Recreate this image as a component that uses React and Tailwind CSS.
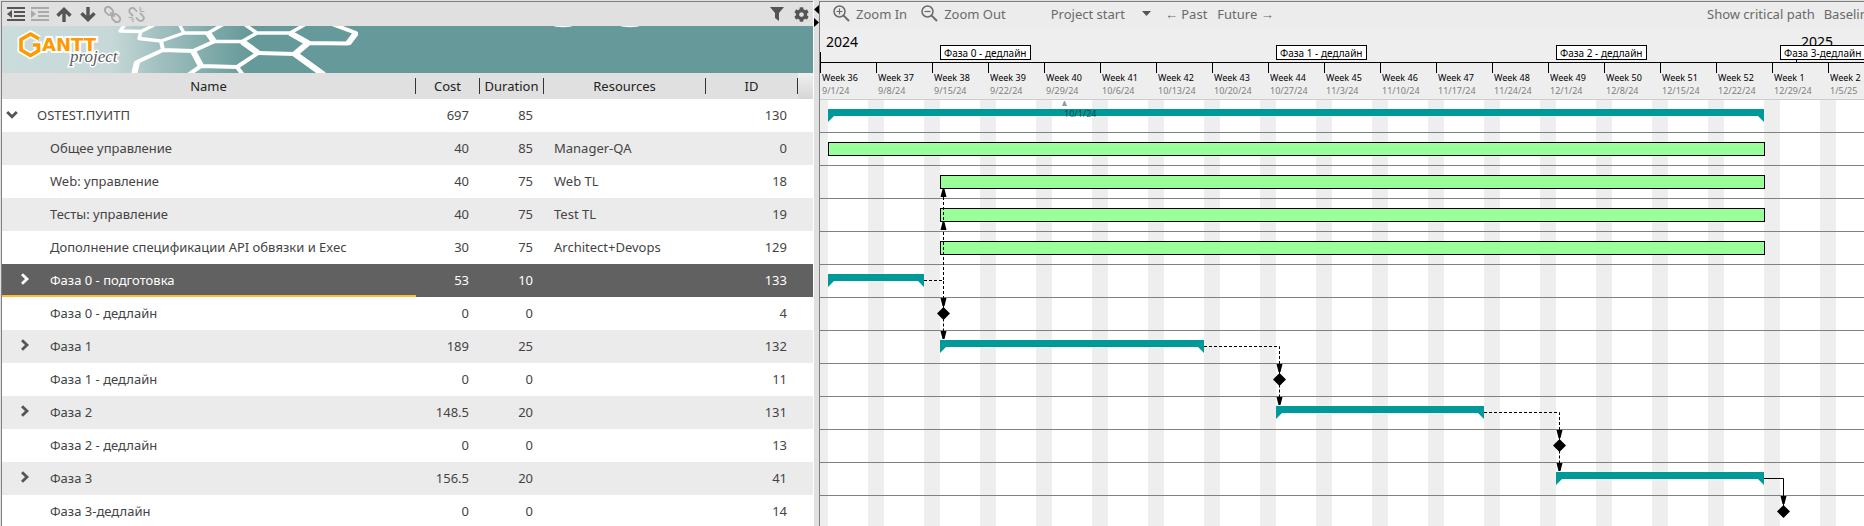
import { FaCog } from 'react-icons/fa';

const DAY = 8;
const ROW = 33;

const tasks = [
  { name: 'OSTEST.ПУИТП', cost: '697', duration: 85, resources: '', id: 130, root: true, kind: 'summary', from: 1, to: 118 },
  { name: 'Общее управление', cost: '40', duration: 85, resources: 'Manager-QA', id: 0, kind: 'task', from: 1, to: 118 },
  { name: 'Web: управление', cost: '40', duration: 75, resources: 'Web TL', id: 18, kind: 'task', from: 15, to: 118 },
  { name: 'Тесты: управление', cost: '40', duration: 75, resources: 'Test TL', id: 19, kind: 'task', from: 15, to: 118 },
  { name: 'Дополнение спецификации API обвязки и Exec', cost: '30', duration: 75, resources: 'Architect+Devops', id: 129, kind: 'task', from: 15, to: 118 },
  { name: 'Фаза 0 - подготовка', cost: '53', duration: 10, resources: '', id: 133, group: true, selected: true, kind: 'summary', from: 1, to: 13 },
  { name: 'Фаза 0 - дедлайн', cost: '0', duration: 0, resources: '', id: 4, kind: 'milestone', from: 15 },
  { name: 'Фаза 1', cost: '189', duration: 25, resources: '', id: 132, group: true, kind: 'summary', from: 15, to: 48 },
  { name: 'Фаза 1 - дедлайн', cost: '0', duration: 0, resources: '', id: 11, kind: 'milestone', from: 57 },
  { name: 'Фаза 2', cost: '148.5', duration: 20, resources: '', id: 131, group: true, kind: 'summary', from: 57, to: 83 },
  { name: 'Фаза 2 - дедлайн', cost: '0', duration: 0, resources: '', id: 13, kind: 'milestone', from: 92 },
  { name: 'Фаза 3', cost: '156.5', duration: 20, resources: '', id: 41, group: true, kind: 'summary', from: 92, to: 118 },
  { name: 'Фаза 3-дедлайн', cost: '0', duration: 0, resources: '', id: 14, kind: 'milestone', from: 120 },
];

const weeks = [
  ['Week 36', '9/1/24'], ['Week 37', '9/8/24'], ['Week 38', '9/15/24'], ['Week 39', '9/22/24'],
  ['Week 40', '9/29/24'], ['Week 41', '10/6/24'], ['Week 42', '10/13/24'], ['Week 43', '10/20/24'],
  ['Week 44', '10/27/24'], ['Week 45', '11/3/24'], ['Week 46', '11/10/24'], ['Week 47', '11/17/24'],
  ['Week 48', '11/24/24'], ['Week 49', '12/1/24'], ['Week 50', '12/8/24'], ['Week 51', '12/15/24'],
  ['Week 52', '12/22/24'], ['Week 1', '12/29/24'], ['Week 2', '1/5/25'],
];

function IconButton({ label, children }) {
  return (
    <button type="button" aria-label={label} className="flex h-6 w-6 items-center justify-center">
      {children}
    </button>
  );
}

function IndentIcon({ out }) {
  return (
    <svg width="18" height="14" viewBox="0 0 18 14" fill="currentColor">
      <path d="M0 0h18v2H0zM7 4h11v2H7zM7 8h11v2H7zM0 12h18v2H0z" />
      <path d={out ? 'M5 3v8L0 7z' : 'M0 3v8l5-4z'} />
    </svg>
  );
}

function ArrowIcon({ down }) {
  return (
    <svg width="16" height="15" viewBox="0 0 16 15" fill="none" stroke="currentColor" strokeWidth="3.4">
      <path d={down ? 'M8 0v12M1.5 6.2 8 12.6l6.500-6.400' : 'M8 15V3M1.5 8.800 8 2.400l6.500 6.400'} />
    </svg>
  );
}

function LinkIcon({ broken }) {
  return broken ? (
    <svg width="17" height="17" viewBox="0 0 17 17" fill="none" stroke="currentColor" strokeWidth="1.800" strokeLinecap="round">
      <path d="M7.500 4.500 9.800 2.200a3 3 0 0 1 4.300 4.300L12 8.500M9.500 12.500l-2.300 2.300a3 3 0 0 1-4.300-4.300L5 8.500" transform="rotate(90 8.500 8.500)" />
      <path d="M12 1v3M16 5.500h-3M13.500 3 12 4.800M5 16v-3M1 11.500h3M3.200 14 5 12.200" strokeWidth="1" />
    </svg>
  ) : (
    <svg width="17" height="17" viewBox="0 0 17 17" fill="none" stroke="currentColor" strokeWidth="1.900">
      <g transform="rotate(45 8.500 8.500)">
        <rect x="-1" y="5.300" width="9" height="6.400" rx="3.200" />
        <rect x="9" y="5.300" width="9" height="6.400" rx="3.200" />
        <path d="M5.500 8.500h6" />
      </g>
    </svg>
  );
}

function ZoomIcon({ plus }) {
  return (
    <svg width="17" height="17" viewBox="0 0 17 17" fill="none" stroke="currentColor">
      <circle cx="6.500" cy="6.500" r="5.500" strokeWidth="1.500" />
      <path d="M10.600 10.600 16 16" strokeWidth="2" />
      <path d={plus ? 'M3.500 6.500h6M6.500 3.500v6' : 'M3.500 6.500h6'} strokeWidth="1.200" />
    </svg>
  );
}

function Banner() {
  return (
    <div className="h-[47px] overflow-hidden bg-[#669999]">
      <svg role="img" aria-label="GanttProject" width="660" height="47" viewBox="2 26 660 47" className="max-w-none">
        <defs>
          <linearGradient id="fade" gradientUnits="userSpaceOnUse" x1="2" y1="0" x2="250" y2="0">
            <stop offset="0" stopColor="#cadddc" />
            <stop offset="0.440" stopColor="#c6d9d8" />
            <stop offset="0.620" stopColor="#a3c2c1" />
            <stop offset="1" stopColor="#669999" />
          </linearGradient>
        </defs>
        <rect x="2" y="26" width="250" height="47" fill="url(#fade)" />
        <g fill="none" stroke="#fff" strokeWidth="4" strokeLinejoin="round">
          <path d="M126 23 120 31 141 31.500 154 25M141 31.500 139 38.500 161 41 184 33 179 24M184 33H208L224 24" strokeWidth="3.400" />
          <path d="M208 33 214 41.500H242L257 33 244 24M257 33H290L306 24" strokeWidth="3.400" />
          <path d="M214 41.500 193 51 163 50 161 41M163 50 137 62 134 75M193 51 201 66 237 67 258 53 242 41.500M201 66 188 75M237 67 243 75" />
          <path d="M258 53 295 54" />
          <path d="M290 33 308 43 348 43.500 356 33 332 24M308 43 295 54 324 75" />
          <path d="M290 33 308 43 295 54 324 75M137 62 134 75M208 33 214 41.500M193 51 201 66M242 41.500 258 53M356 33 348 43.500" strokeWidth="6" />
        </g>
        <ellipse cx="563" cy="26" rx="9" ry="1.200" fill="#fff" />
        <ellipse cx="630" cy="26" rx="9" ry="1.200" fill="#fff" />
        <path d="M39 38.800 30.500 34 21 39.500V50L30.500 55.500 38.500 50.800V45H33" fill="none" stroke="#fff" strokeWidth="7" />
        <text x="42" y="51" className="fill-[#ff9900] stroke-white [stroke-width:4px] [paint-order:stroke] font-['DejaVu_Sans',sans-serif] text-[18px] font-bold">ANTT</text>
        <path d="M39 38.800 30.500 34 21 39.500V50L30.500 55.500 38.500 50.800V45H33" fill="none" stroke="#ff9900" strokeWidth="3.600" />
        <text x="70" y="62" className="fill-[#5a5a5a] stroke-white [stroke-width:3px] [paint-order:stroke] font-['Liberation_Serif',serif] text-[17px] italic">project</text>
      </svg>
    </div>
  );
}

function HeaderCell({ children }) {
  return (
    <th scope="col" className="p-0 font-normal">
      <div className="flex h-4 items-center justify-center border-r border-[#333]">{children}</div>
    </th>
  );
}

function TaskTable() {
  return (
    <table className="w-full table-fixed border-collapse text-[13px] leading-4">
      <colgroup>
        <col />
        <col className="w-16" />
        <col className="w-16" />
        <col className="w-[162px]" />
        <col className="w-[92px]" />
        <col className="w-[15px]" />
      </colgroup>
      <thead>
        <tr className="h-[26px] bg-[#e0e0e0] text-[#222]">
          <HeaderCell>Name</HeaderCell>
          <HeaderCell>Cost</HeaderCell>
          <HeaderCell>Duration</HeaderCell>
          <HeaderCell>Resources</HeaderCell>
          <HeaderCell>ID</HeaderCell>
          <td className="bg-linear-to-b from-[#f0f0f0] to-[#d6d6d6] p-0" />
        </tr>
      </thead>
      <tbody>
        {tasks.map((t, i) => (
          <tr
            key={t.id}
            aria-selected={!!t.selected}
            className={`h-[33px] ${t.selected ? 'bg-[#616161] text-white' : i % 2 ? 'bg-[#ebebeb] text-[#444]' : 'bg-white text-[#444]'}`}
          >
            <td className="p-0">
              <div className={`flex h-[33px] items-center ${t.root ? 'pl-1' : 'pl-[18px]'} ${t.selected ? 'border-b-2 border-[#fbc02d]' : 'pb-0.5'}`}>
                {t.root || t.group ? (
                  <button
                    type="button"
                    aria-label={t.root ? 'Collapse' : 'Expand'}
                    className={`flex shrink-0 items-center ${t.root ? 'w-[31px]' : 'w-[30px]'} ${t.selected ? 'text-white' : 'text-[#555]'}`}
                  >
                    <svg width="12" height="14" viewBox="0 0 12 14" fill="none" stroke="currentColor" strokeWidth="2.800">
                      <path d={t.root ? 'M1.200 4 6 8.800 10.800 4' : 'M2 1.200 7 6 2 10.800'} />
                    </svg>
                  </button>
                ) : (
                  <span className="w-[30px] shrink-0" />
                )}
                <span className="whitespace-nowrap">{t.name}</span>
              </div>
            </td>
            <td className="p-0 pr-[11px] pb-0.5 text-right">{t.cost}</td>
            <td className="p-0 pr-[11px] pb-0.5 text-right">{t.duration}</td>
            <td className="p-0 pb-0.5 pl-2.5 whitespace-nowrap">{t.resources}</td>
            <td className="p-0 pr-[11px] pb-0.5 text-right">{t.id}</td>
            <td className="p-0" />
          </tr>
        ))}
      </tbody>
    </table>
  );
}

function Bar({ task }) {
  const left = task.from * DAY;
  if (task.kind === 'task') {
    return <div className="h-3.5 border border-black bg-[#99ff99]" style={{ marginLeft: left, width: (task.to - task.from) * DAY + 1 }} />;
  }
  if (task.kind === 'summary') {
    return (
      <div className="text-[#009999]" style={{ marginLeft: left, width: (task.to - task.from) * DAY }}>
        <div className="h-[7px] bg-current" />
        <div className="flex justify-between">
          <svg width="6" height="6" fill="currentColor"><path d="M0 0h6L0 6z" /></svg>
          <svg width="6" height="6" fill="currentColor"><path d="M0 0h6v6z" /></svg>
        </div>
      </div>
    );
  }
  return (
    <svg width="13" height="13" className="block" style={{ marginLeft: left - 3 }}>
      <path d="M6.500 0 13 6.500 6.500 13 0 6.500z" />
    </svg>
  );
}

function Arrow({ x, y, up }) {
  return <path d={up ? `M${x - 3} ${y}h6l-2-8h-2z` : `M${x - 3} ${y}h6l-2 8h-2z`} fill="#000" stroke="none" />;
}

function Dependencies() {
  const links = [
    { row: 5, from: 13, to: 15, next: true },
    { row: 7, from: 48, to: 57, next: true },
    { row: 9, from: 83, to: 92, next: true },
    { row: 11, from: 118, to: 120, solid: true },
  ];
  const x0 = 15 * DAY + 3.5;
  return (
    <svg width="1044" height="429" className="pointer-events-none absolute top-0 left-0" fill="none" stroke="#000">
      {links.map((l) => {
        const x = l.to * DAY + 3.5;
        const y = l.row * ROW + 16.5;
        return (
          <g key={l.row}>
            <path d={`M${l.from * DAY} ${y}H${x}V${y + 18}`} strokeDasharray={l.solid ? undefined : '3 2'} />
            <path d={`M${x} ${y + 24}v6`} />
            <Arrow x={x} y={(l.row + 1) * ROW + 1} />
            {l.next && <path d={`M${x} ${y + 38}v20`} strokeDasharray="3 2" />}
            {l.next && <Arrow x={x} y={(l.row + 2) * ROW + 1} />}
          </g>
        );
      })}
      <path d={`M${x0} 181V98`} strokeDasharray="3 2" />
      <Arrow x={x0} y={98} up />
      <Arrow x={x0} y={131} up />
    </svg>
  );
}

function Timeline() {
  return (
    <div className="bg-[#eeeeee] text-black">
      <div className="relative h-[35px]">
        <span className="absolute top-[5px] left-1.5 text-[14px] leading-5">2024</span>
        <span className="absolute top-[5px] left-[981px] text-[14px] leading-5">2025</span>
        <span className="absolute bottom-0 left-0 h-2.5 w-px bg-black" />
        <span className="absolute bottom-0 left-[976px] h-2.5 w-px bg-black" />
        {tasks.filter((t) => t.kind === 'milestone').map((t) => (
          <span
            key={t.id}
            className="absolute top-[18px] h-[15px] border border-black bg-white px-[3px] text-[10px] leading-[14px] whitespace-nowrap"
            style={{ left: t.from * DAY }}
          >
            {t.name}
          </span>
        ))}
      </div>
      <div className="flex h-[37px] overflow-hidden border-t border-black text-[9px] leading-[10px]">
        {weeks.map(([w, d]) => (
          <div key={w} className="flex w-14 shrink-0 flex-col whitespace-nowrap">
            <div className="h-2.5 border-l border-black" />
            <span className="pl-0.5">{w}</span>
            <span className="mt-[3px] pl-0.5 text-[#808080]">{d}</span>
          </div>
        ))}
      </div>
    </div>
  );
}

function Chart() {
  return (
    <div className="relative bg-[repeating-linear-gradient(90deg,#eeeeee_0_8px,#ffffff_8px_48px,#eeeeee_48px_56px)]">
      {tasks.map((t, i) => (
        <div key={t.id} className={`h-[33px] overflow-hidden border-t pt-[9px] ${i === 0 ? 'border-[#cccccc]' : 'border-[#808080]'}`}>
          <Bar task={t} />
        </div>
      ))}
      <Dependencies />
      <div className="absolute top-0.5 left-[242px] text-[9px] leading-[10px] text-black/60">
        <svg width="5" height="5" className="block" fill="#999"><path d="M2 0h1l2 5H0z" /></svg>
        <div className="pt-[3px] pl-0.5">10/1/24</div>
      </div>
    </div>
  );
}

export default function App() {
  return (
    <div className="flex h-screen overflow-hidden bg-[#e0e0e0] pt-px font-['Noto_Sans',sans-serif]">
      <section className="ml-px w-[812px] shrink-0 border-t border-l border-[#808080]">
        <div className="flex h-6 items-center bg-[#e0e0e0] pl-0.5 text-[#555]">
          <IconButton label="Outdent"><IndentIcon out /></IconButton>
          <span className="flex text-[#aaa]"><IconButton label="Indent"><IndentIcon /></IconButton></span>
          <IconButton label="Move up"><ArrowIcon /></IconButton>
          <IconButton label="Move down"><ArrowIcon down /></IconButton>
          <span className="flex text-[#aaa]">
            <IconButton label="Link tasks"><LinkIcon /></IconButton>
            <IconButton label="Unlink tasks"><LinkIcon broken /></IconButton>
          </span>
          <span className="ml-auto flex">
            <IconButton label="Filter">
              <svg width="14" height="14" viewBox="0 0 14 14" fill="currentColor"><path d="M0 0h14L9 6v8l-4-3V6z" /></svg>
            </IconButton>
            <IconButton label="Settings"><FaCog size={15} /></IconButton>
          </span>
        </div>
        <Banner />
        <TaskTable />
      </section>
      <div className="flex w-1.5 shrink-0 flex-col gap-1 border-l border-white pt-1">
        <svg width="5" height="9" className="block"><path d="M5 0v9L0 4.500z" /></svg>
        <svg width="5" height="9" className="block"><path d="M0 0v9l5-4.500z" /></svg>
      </div>
      <section className="min-w-0 flex-1 overflow-hidden border-t border-l border-[#808080]">
        <div className="flex h-[25px] items-center bg-[#ececec] pb-0.5 pl-[13px] text-[13px] leading-5 whitespace-nowrap text-[#6a6a6a]">
          <button type="button" className="flex items-center gap-1.5"><ZoomIcon plus />Zoom In</button>
          <button type="button" className="ml-3.5 flex items-center gap-1.5"><ZoomIcon />Zoom Out</button>
          <button type="button" className="ml-[45px] flex items-center gap-[17px]">
            Project start
            <svg width="9" height="5" fill="#555"><path d="M0 0h9L4.500 5z" /></svg>
          </button>
          <button type="button" className="ml-3.5">← Past</button>
          <button type="button" className="ml-2.5">Future →</button>
          <div className="ml-auto flex w-[157px] gap-[9px] overflow-hidden">
            <button type="button" className="shrink-0">Show critical path</button>
            <button type="button" className="shrink-0">Baselines</button>
          </div>
        </div>
        <Timeline />
        <Chart />
      </section>
    </div>
  );
}
